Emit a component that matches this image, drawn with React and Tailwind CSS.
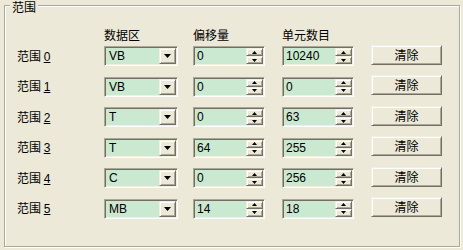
const rows = [
  { area: 'VB', offset: '0', count: '10240' },
  { area: 'VB', offset: '0', count: '0' },
  { area: 'T', offset: '0', count: '63' },
  { area: 'T', offset: '64', count: '255' },
  { area: 'C', offset: '0', count: '256' },
  { area: 'MB', offset: '14', count: '18' },
];

const cjk = "font-['Noto_Sans_CJK_SC',sans-serif]";
const latin = "font-['Liberation_Sans',Arial,sans-serif]";

// sunken 3d edge, classic windows look
const sunken =
  'border border-t-[#aca899] border-l-[#aca899] border-r-white border-b-white shadow-[inset_1px_1px_0_#716f64,inset_-1px_-1px_0_#f1efe2] p-px';
const raised =
  'border border-t-[#f1efe2] border-l-[#f1efe2] border-r-[#716f64] border-b-[#716f64] shadow-[inset_1px_1px_0_#fff,inset_-1px_-1px_0_#aca899] bg-[#ece9d8]';

const ComboBox = ({ value }) => (
  <div className={`flex w-[74px] h-[20px] bg-[#cbe8d0] ${sunken}`}>
    <div className={`flex-1 pl-[3px] text-[12px] leading-[16px] text-black ${latin}`}>{value}</div>
    <div className={`flex w-[17px] items-center justify-center ${raised}`}>
      <svg width="7" height="4" viewBox="0 0 7 4">
        <polygon points="0,0 7,0 3.5,4" fill="#000" />
      </svg>
    </div>
  </div>
);

const SpinEdit = ({ value }) => (
  <div className={`flex w-[72px] h-[20px] bg-[#cbe8d0] ${sunken}`}>
    <div className={`flex-1 pl-[2px] text-[12px] leading-[16px] text-black ${latin}`}>{value}</div>
    <div className="flex w-[17px] flex-col">
      <div className={`flex h-[8px] items-center justify-center ${raised}`}>
        <svg width="5" height="3" viewBox="0 0 5 3">
          <polygon points="2.5,0 5,3 0,3" fill="#000" />
        </svg>
      </div>
      <div className={`flex h-[8px] items-center justify-center ${raised}`}>
        <svg width="5" height="3" viewBox="0 0 5 3">
          <polygon points="0,0 5,0 2.5,3" fill="#000" />
        </svg>
      </div>
    </div>
  </div>
);

const App = () => {
  return (
    <div className="w-[463px] h-[250px] overflow-hidden bg-[#ece9d8] pt-[5px] pl-[4px]">
      <div className="relative w-[456px] h-[242px] border border-[#aca899] shadow-[inset_1px_1px_0_#fff,1px_1px_0_#fff]">
        <span className={`absolute left-[5px] -top-[6px] bg-[#ece9d8] px-[2px] text-[12px] leading-[14px] text-black ${cjk}`}>
          范围
        </span>

        <div className="pl-[12px] pt-[23px]">
          {/* column headers */}
          <div className={`grid grid-cols-[87px_89px_89px_89px_auto] h-[12px] text-[12px] leading-[12px] text-black ${cjk}`}>
            <div />
            <div>数据区</div>
            <div>偏移量</div>
            <div>单元数目</div>
            <div />
          </div>

          <div className="mt-[5px] flex flex-col gap-y-[10.6px]">
            {rows.map((row, i) => (
              <div key={i} className="grid grid-cols-[87px_89px_89px_89px_auto] h-[20px] items-center">
                <div className={`text-[12px] leading-[12px] text-black ${cjk}`}>
                  范围 <span className={`underline ${latin}`}>{i}</span>
                </div>
                <ComboBox value={row.area} />
                <SpinEdit value={row.offset} />
                <SpinEdit value={row.count} />
                <button
                  className={`-mt-[3px] w-[71px] h-[20px] text-[12px] leading-[16px] text-black ${cjk} ${raised}`}
                >
                  清除
                </button>
              </div>
            ))}
          </div>
        </div>
      </div>
    </div>
  );
};

export default App;
